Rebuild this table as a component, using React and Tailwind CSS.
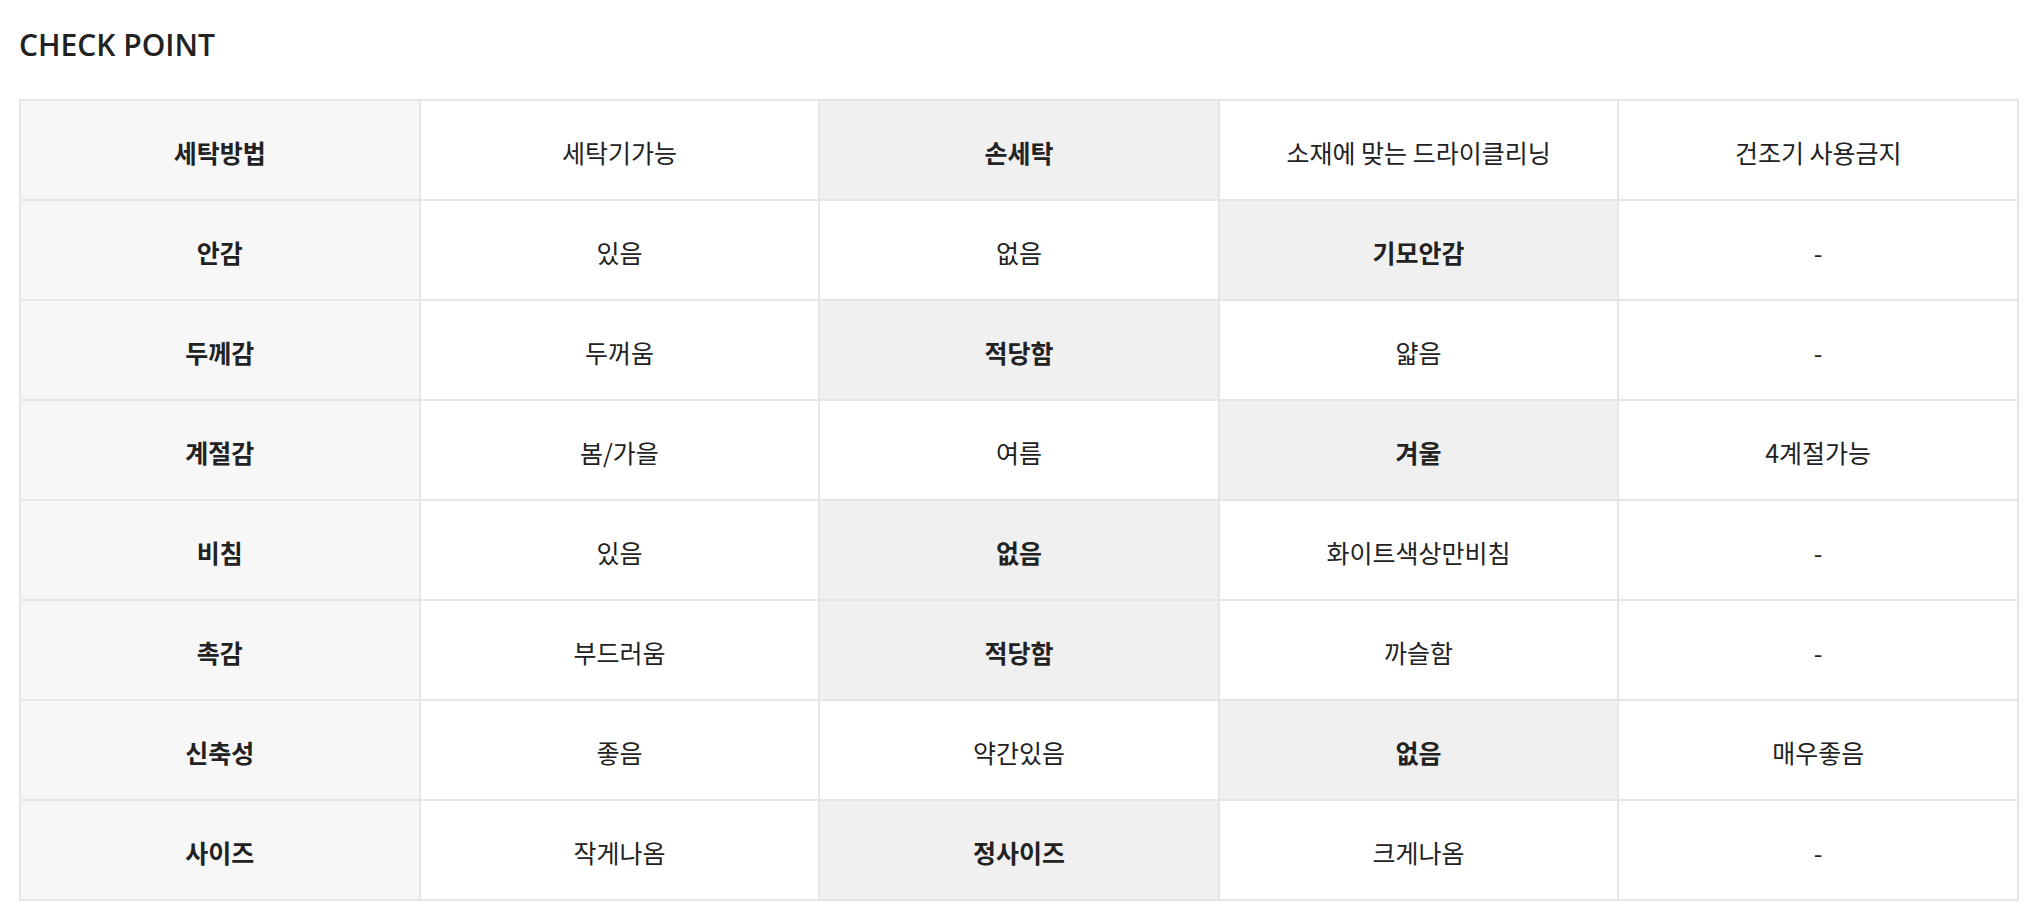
import React from 'react';

// each row: label + 4 values, `on` = index of the selected value (0-based)
const rows = [
  { label: '세탁방법', values: ['세탁기가능', '손세탁', '소재에 맞는 드라이클리닝', '건조기 사용금지'], on: 1 },
  { label: '안감', values: ['있음', '없음', '기모안감', '-'], on: 2 },
  { label: '두께감', values: ['두꺼움', '적당함', '얇음', '-'], on: 1 },
  { label: '계절감', values: ['봄/가을', '여름', '겨울', '4계절가능'], on: 2 },
  { label: '비침', values: ['있음', '없음', '화이트색상만비침', '-'], on: 1 },
  { label: '촉감', values: ['부드러움', '적당함', '까슬함', '-'], on: 1 },
  { label: '신축성', values: ['좋음', '약간있음', '없음', '매우좋음'], on: 2 },
  { label: '사이즈', values: ['작게나옴', '정사이즈', '크게나옴', '-'], on: 1 },
];

const font = { fontFamily: '"Noto Sans CJK KR", "Noto Sans", sans-serif' };

export default function App() {
  return (
    <div className="bg-white min-h-screen pl-[19px] pt-[23px] text-[#222]" style={font}>
      <h2 className="font-['Open_Sans','Noto_Sans',sans-serif] text-[30px] font-semibold leading-[44px] text-[#222]">
        CHECK POINT
      </h2>

      <table className="mt-[32px] w-[2000px] table-fixed border-collapse border-2 border-[#e6e6e6]">
        <tbody>
          {rows.map((row) => (
            <tr key={row.label} className="h-[100px]">
              <th className="w-1/5 border-2 border-[#e6e6e6] bg-[#f7f7f7] pt-[5px] text-[25px] font-bold">
                {row.label}
              </th>
              {row.values.map((v, i) => (
                <td
                  key={i}
                  className={
                    i === row.on
                      ? 'w-1/5 border-2 border-[#e6e6e6] bg-[#f0f0f0] pt-[5px] text-center text-[25px] font-bold'
                      : 'w-1/5 border-2 border-[#e6e6e6] bg-white pt-[5px] text-center text-[25px]'
                  }
                >
                  {v}
                </td>
              ))}
            </tr>
          ))}
        </tbody>
      </table>
    </div>
  );
}
